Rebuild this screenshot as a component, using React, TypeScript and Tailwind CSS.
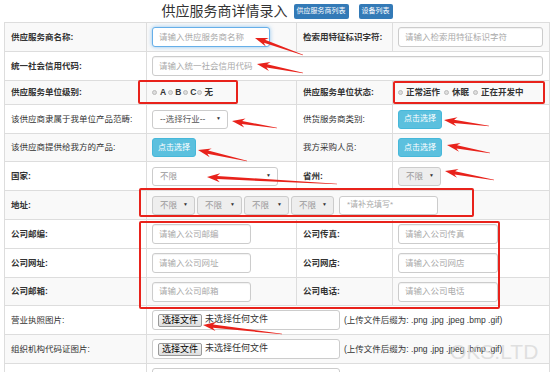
import React from 'react'

type Pt = [number, number]

// red annotation arrows: tip -> tail
const arrows: [Pt, Pt][] = [
  [[255, 38], [303, 55]],
  [[257, 64], [303, 73]],
  [[232, 121], [277, 128]],
  [[198, 150], [247, 161]],
  [[207, 177], [337, 184]],
  [[444, 120], [489, 126]],
  [[447, 145], [490, 153]],
  [[445, 171], [494, 180]],
  [[203, 325], [282, 334]],
]

const arrowPoints = (tip: Pt, tail: Pt) => {
  const dx = tail[0] - tip[0]
  const dy = tail[1] - tip[1]
  const len = Math.hypot(dx, dy)
  const ux = dx / len
  const uy = dy / len
  const nx = -uy
  const ny = ux
  const at = (d: number, w: number): string =>
    `${(tip[0] + ux * d + nx * w).toFixed(1)},${(tip[1] + uy * d + ny * w).toFixed(1)}`
  return [
    at(0, 0),
    at(13, 4.5),
    at(10, 1.6),
    at(len, 0.3),
    at(len, -0.3),
    at(10, -1.6),
    at(13, -4.5),
  ].join(' ')
}

const cellB = 'border border-[#ddd]'
const labelCls = `${cellB} pl-[6px] text-[8.5px] font-bold text-[#333] whitespace-nowrap`
const valCls = `${cellB} pl-[5px] pr-[6px]`

function TextInput({ ph, w, focus }: { ph: string; w?: string; focus?: boolean }) {
  return (
    <div
      className={`h-[20px] ${w ?? 'w-full'} rounded-[3px] border bg-white flex items-center pl-[6px] text-[8.5px] text-[#a9a9a9] ${
        focus ? 'border-[#66afe9] shadow-[0_0_4px_rgba(102,175,233,0.7)]' : 'border-[#ccc] shadow-[inset_0_1px_1px_rgba(0,0,0,0.06)]'
      }`}
    >
      {ph}
    </div>
  )
}

function Select({ text, w, gray, dark }: { text: string; w: string; gray?: boolean; dark?: boolean }) {
  return (
    <div
      className={`h-[19px] ${w} rounded-[3px] border border-[#ccc] flex items-center justify-between pl-[7px] pr-[6px] text-[8.5px] ${
        gray ? 'bg-[#eee]' : 'bg-white'
      } ${dark ? 'text-[#555]' : 'text-[#999]'}`}
    >
      <span>{text}</span>
      <span className="text-[5px] text-[#333]">▼</span>
    </div>
  )
}

function PickButton() {
  return (
    <div className="h-[19px] w-[44px] rounded-[3px] bg-[#5bc0de] border border-[#46b8da] flex items-center justify-center text-[8px] text-white">
      点击选择
    </div>
  )
}

function Radio({ children }: { children: React.ReactNode }) {
  return (
    <span className="inline-flex items-center">
      <span className="w-[5px] h-[5px] rounded-full bg-[#ddd] border border-[#bbb] mr-[2px]" />
      {children}
    </span>
  )
}

function FileRow({ label, striped }: { label: string; striped?: boolean }) {
  return (
    <tr className={`h-[29px] ${striped ? 'bg-[#f9f9f9]' : 'bg-white'}`}>
      <td className={labelCls + ' font-normal'}>{label}</td>
      <td colSpan={3} className={valCls}>
        <div className="flex items-center">
          <div className="h-[20px] w-[188px] rounded-[3px] border border-[#ccc] bg-white flex items-center pl-[5px] text-[9px] text-[#333]">
            <span className="h-[13px] px-[3px] border border-[#999] rounded-[2px] bg-gradient-to-b from-[#f6f6f6] to-[#dedede] flex items-center leading-none text-black">
              选择文件
            </span>
            <span className="ml-[3px]">未选择任何文件</span>
          </div>
          <span className="ml-[4px] text-[8.5px] text-[#333]">(上传文件后缀为: .png .jpg .jpeg .bmp .gif)</span>
        </div>
      </td>
    </tr>
  )
}

export default function App() {
  return (
    <div
      className="relative w-[554px] h-[372px] overflow-hidden bg-white"
      style={{ fontFamily: '"Liberation Sans", "Noto Sans CJK SC", sans-serif' }}
    >
      {/* Title */}
      <div className="h-[22px] flex items-center justify-center">
        <span className="text-[14px] text-[#333] leading-none">供应服务商详情录入</span>
        <span className="ml-[6px] h-[15px] px-[3px] rounded-[2px] bg-[#337ab7] text-white text-[7px] flex items-center">供应服务商列表</span>
        <span className="ml-[10px] h-[15px] px-[3px] rounded-[2px] bg-[#337ab7] text-white text-[7px] flex items-center">设备列表</span>
      </div>

      <table className="ml-[4px] w-[546px] table-fixed border-collapse">
        <colgroup>
          <col className="w-[142px]" />
          <col className="w-[150px]" />
          <col className="w-[96px]" />
          <col />
        </colgroup>
        <tbody>
          <tr className="h-[29px] bg-[#f9f9f9]">
            <td className={labelCls}>供应服务商名称:</td>
            <td className={valCls}>
              <TextInput ph="请输入供应服务商名称" w="w-[118px]" focus />
            </td>
            <td className={labelCls}>检索用特征标识字符:</td>
            <td className={valCls}>
              <TextInput ph="请输入检索用特征标识字符" />
            </td>
          </tr>
          <tr className="h-[29px] bg-white">
            <td className={labelCls}>统一社会信用代码:</td>
            <td colSpan={3} className={valCls}>
              <TextInput ph="请输入统一社会信用代码" />
            </td>
          </tr>
          <tr className="h-[24px] bg-[#f9f9f9]">
            <td className={labelCls}>供应服务单位级别:</td>
            <td className={valCls}>
              <div className="flex items-center text-[8.5px] font-bold text-[#333]">
                <Radio>
                  <span className="ml-[1px]">A</span>
                </Radio>
                <span className="ml-[2px]">
                  <Radio>B</Radio>
                </span>
                <span className="ml-[2px]">
                  <Radio>C</Radio>
                </span>
                <span className="ml-[1px]">
                  <Radio>无</Radio>
                </span>
              </div>
            </td>
            <td className={labelCls}>供应服务单位状态:</td>
            <td className={valCls}>
              <div className="flex items-center gap-[4px] text-[8.5px] font-bold text-[#333]">
                <Radio>
                  <span className="ml-[1px]">正常运作</span>
                </Radio>
                <Radio>
                  <span className="ml-[1px]">休眠</span>
                </Radio>
                <Radio>
                  <span className="ml-[1px]">正在开发中</span>
                </Radio>
              </div>
            </td>
          </tr>
          <tr className="h-[29px] bg-white">
            <td className={labelCls + ' font-normal'}>该供应商隶属于我单位产品范畴:</td>
            <td className={valCls}>
              <Select text="--选择行业--" w="w-[76px]" dark />
            </td>
            <td className={labelCls + ' font-normal'}>供货服务商类别:</td>
            <td className={valCls}>
              <PickButton />
            </td>
          </tr>
          <tr className="h-[28px] bg-[#f9f9f9]">
            <td className={labelCls + ' font-normal'}>该供应商提供给我方的产品:</td>
            <td className={valCls}>
              <PickButton />
            </td>
            <td className={labelCls + ' font-normal'}>我方采购人员:</td>
            <td className={valCls}>
              <PickButton />
            </td>
          </tr>
          <tr className="h-[29px] bg-white">
            <td className={labelCls}>国家:</td>
            <td className={valCls}>
              <Select text="不限" w="w-[126px]" />
            </td>
            <td className={labelCls}>省州:</td>
            <td className={valCls}>
              <Select text="不限" w="w-[43px]" gray />
            </td>
          </tr>
          <tr className="h-[29px] bg-[#f9f9f9]">
            <td className={labelCls}>地址:</td>
            <td colSpan={3} className={valCls}>
              <div className="flex items-center gap-[2px]">
                <Select text="不限" w="w-[43px]" gray />
                <Select text="不限" w="w-[45px]" gray />
                <Select text="不限" w="w-[45px]" gray />
                <Select text="不限" w="w-[43px]" gray />
                <div className="ml-[3px] h-[19px] w-[99px] rounded-[3px] border border-[#ccc] bg-white flex items-center pl-[7px] text-[8px] text-[#aaa]">
                  *请补充填写*
                </div>
              </div>
            </td>
          </tr>
          <tr className="h-[29px] bg-white">
            <td className={labelCls}>公司邮编:</td>
            <td className={valCls}>
              <TextInput ph="请输入公司邮编" w="w-[99px]" />
            </td>
            <td className={labelCls}>公司传真:</td>
            <td className={valCls}>
              <TextInput ph="请输入公司传真" w="w-[100px]" />
            </td>
          </tr>
          <tr className="h-[29px] bg-white">
            <td className={labelCls}>公司网址:</td>
            <td className={valCls}>
              <TextInput ph="请输入公司网址" w="w-[99px]" />
            </td>
            <td className={labelCls}>公司网店:</td>
            <td className={valCls}>
              <TextInput ph="请输入公司网店" w="w-[100px]" />
            </td>
          </tr>
          <tr className="h-[28px] bg-[#f9f9f9]">
            <td className={labelCls}>公司邮箱:</td>
            <td className={valCls}>
              <TextInput ph="请输入公司邮箱" w="w-[99px]" />
            </td>
            <td className={labelCls}>公司电话:</td>
            <td className={valCls}>
              <TextInput ph="请输入公司电话" w="w-[100px]" />
            </td>
          </tr>
          <FileRow label="营业执照图片:" />
          <FileRow label="组织机构代码证图片:" striped />
          <tr className="h-[29px] bg-white">
            <td className={labelCls}></td>
            <td colSpan={3} className={`${valCls} align-top pt-[4px]`}>
              <div className="h-[20px] w-[188px] rounded-[3px] border border-[#ccc] bg-white" />
            </td>
          </tr>
        </tbody>
      </table>

      {/* red annotation boxes */}
      <div className="absolute left-[138px] top-[80px] w-[100px] h-[24px] border-2 border-[#e8221b] rounded-[2px]" />
      <div className="absolute left-[393px] top-[81px] w-[152px] h-[23px] border-2 border-[#e8221b] rounded-[2px]" />
      <div className="absolute left-[139px] top-[188px] w-[335px] h-[29px] border-2 border-[#e8221b] rounded-[2px]" />
      <div className="absolute left-[139px] top-[221px] w-[361px] h-[88px] border-2 border-[#e8221b] rounded-[2px]" />

      <svg className="absolute left-0 top-0 pointer-events-none" width="554" height="372">
        {arrows.map(([tip, tail], i) => (
          <polygon key={i} points={arrowPoints(tip, tail)} fill="#e8221b" />
        ))}
      </svg>

      {/* watermark */}
      <div className="absolute left-[450px] top-[341px] text-[21px] leading-none text-[#d4d4d4]/70">
        OKS.LTD
      </div>
    </div>
  )
}
